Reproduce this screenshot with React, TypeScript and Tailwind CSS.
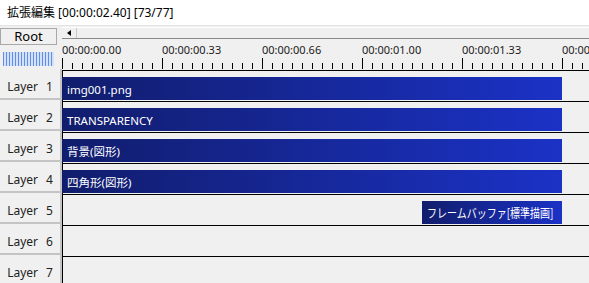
const layers = [
  { name: "1", clip: { label: "img001.png", left: 0, width: 500 } },
  { name: "2", clip: { label: "TRANSPARENCY", left: 0, width: 500 } },
  { name: "3", clip: { label: "背景(図形)", left: 0, width: 500 } },
  { name: "4", clip: { label: "四角形(図形)", left: 0, width: 500 } },
  { name: "5", clip: { label: "フレームバッファ[標準描画]", left: 360, width: 140, narrow: true } },
  { name: "6", clip: null },
  { name: "7", clip: null },
];

const marks = ["00:00:00.00", "00:00:00.33", "00:00:00.66", "00:00:01.00", "00:00:01.33", "00:00:01.66"];

function Ruler() {
  const ticks = Array.from({ length: 53 }, (_, i) => i);
  return (
    <div className="relative h-[30px] overflow-hidden">
      {marks.map((m, i) => (
        <span
          key={m}
          className="absolute top-[5px] text-[11px] leading-none text-[#1a1a1a] whitespace-nowrap"
          style={{ left: i * 100 }}
        >
          {m}
        </span>
      ))}
      <svg className="absolute left-0 bottom-0" width="527" height="12">
        {ticks.map((i) => (
          <line
            key={i}
            x1={i * 10 + 0.5}
            x2={i * 10 + 0.5}
            y1={i % 10 === 0 ? 1 : 6}
            y2={12}
            stroke="#000"
            strokeWidth="1"
          />
        ))}
      </svg>
    </div>
  );
}

export default function App() {
  return (
    <div className="w-[589px] h-[283px] overflow-hidden bg-[#f0f0f0] font-['Noto_Sans','Noto_Sans_CJK_JP',sans-serif] text-[12px] text-black">
      {/* タイトル */}
      <div className="h-[25px] bg-white pl-[7px] flex items-center font-['Noto_Sans','Noto_Sans_CJK_JP',sans-serif] text-[12px]">
        拡張編集 [00:00:02.40] [73/77]
      </div>
      <div className="h-[1px] bg-[#e3e3e3]" />

      <div className="flex">
        {/* 左側レイヤー名 */}
        <div className="w-[62px] shrink-0">
          <div className="h-[43px] pt-[2px]">
            <div className="w-[57px] h-[17px] border border-[#a8a8a8] bg-[#f0f0f0] flex items-center justify-center text-[13px]">
              Root
            </div>
            <div className="mt-[7px] ml-[3px] w-[51px] h-[14px] bg-[repeating-linear-gradient(90deg,#5f8fe6_0px,#5f8fe6_1.5px,#d3e0f7_1.5px,#d3e0f7_3px)]" />
          </div>
          {layers.map((l) => (
            <div
              key={l.name}
              className="h-[31px] w-[62px] border-r-2 border-b-2 border-[#c4c4c4] flex items-center justify-center pt-[6px] text-[12px] text-[#222]"
            >
              <span>Layer</span>
              <span className="ml-[8px]">{l.name}</span>
            </div>
          ))}
        </div>

        {/* タイムライン */}
        <div className="flex-1 min-w-0">
          <div className="h-[43px]">
            <div className="mt-[1px] h-[11px] border-t border-white flex">
              <div className="w-[15px] h-[10px] border-r border-[#c8c8c8] flex items-center justify-center">
                <div className="w-0 h-0 border-y-[3px] border-y-transparent border-r-[4px] border-r-black" />
              </div>
            </div>
            <div className="h-[1px] bg-[#8a8a8a]" />
            <Ruler />
          </div>
          {layers.map((l) => (
            <div key={l.name} className="h-[31px] border-t border-l border-black pt-[6px]">
              {l.clip && (
                <div
                  className="h-[23px] bg-[linear-gradient(90deg,#111d6c,#1b32c6)] text-white flex items-center pl-[5px] pt-[2px] whitespace-nowrap overflow-hidden text-[11.5px]"
                  style={{ marginLeft: l.clip.left - 1, width: l.clip.width }}
                >
                  {l.clip.narrow ? (
                    <span className="inline-block origin-left scale-x-[0.8] text-[12.5px] font-['Noto_Sans_CJK_JP',sans-serif]">
                      {l.clip.label}
                    </span>
                  ) : (
                    l.clip.label
                  )}
                </div>
              )}
            </div>
          ))}
        </div>
      </div>
    </div>
  );
}
